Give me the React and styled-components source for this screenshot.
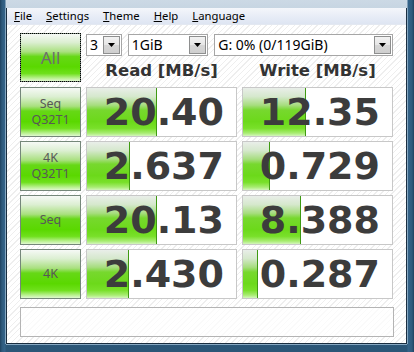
import React from 'react';
import styled, { createGlobalStyle } from 'styled-components';

const menus = [
  ['F', 'ile'],
  ['S', 'ettings'],
  ['T', 'heme'],
  ['H', 'elp'],
  ['L', 'anguage'],
];

const results = [
  { label: ['Seq', 'Q32T1'], read: '20.40', write: '12.35' },
  { label: ['4K', 'Q32T1'], read: '2.637', write: '0.729' },
  { label: ['Seq'], read: '20.13', write: '8.388' },
  { label: ['4K'], read: '2.430', write: '0.287' },
];

// CrystalDiskMark bars use a log scale: 0.1 MB/s .. 10000 MB/s
const barPercent = (value) => {
  const v = parseFloat(value);
  return Math.max(0, Math.min(100, (Math.log10(v * 10) / 5) * 100));
};

function Combo({ value, width }) {
  return (
    <ComboBox $width={width}>
      <ComboText>{value}</ComboText>
      <DropButton>
        <svg width="7" height="4" viewBox="0 0 7 4">
          <path d="M0 0h7L3.5 4z" fill="#000" />
        </svg>
      </DropButton>
    </ComboBox>
  );
}

function ResultCell({ value }) {
  return (
    <Cell>
      <Bar style={{ width: `${barPercent(value)}%` }} />
      <Value>{value}</Value>
    </Cell>
  );
}

export default function App() {
  return (
    <>
      <GlobalStyle />
      <Window>
        <Client>
          <MenuBar>
            {menus.map(([key, rest]) => (
              <MenuItem key={key}>
                <u>{key}</u>
                {rest}
              </MenuItem>
            ))}
          </MenuBar>
          <Body>
            <Top>
              <GreenButton $focused $big>
                All
              </GreenButton>
              <Controls>
                <Combos>
                  <Combo value="3" width={36} />
                  <Combo value="1GiB" width={81} />
                  <Combo value="G: 0% (0/119GiB)" width={180} />
                </Combos>
                <Headers>
                  <Header>Read [MB/s]</Header>
                  <Header>Write [MB/s]</Header>
                </Headers>
              </Controls>
            </Top>
            <Rows>
              {results.map((r) => (
                <Row key={r.label.join('-') + r.read}>
                  <GreenButton>
                    {r.label.map((line) => (
                      <span key={line}>{line}</span>
                    ))}
                  </GreenButton>
                  <ResultCell value={r.read} />
                  <ResultCell value={r.write} />
                </Row>
              ))}
            </Rows>
            <Comment />
          </Body>
        </Client>
      </Window>
    </>
  );
}

const GlobalStyle = createGlobalStyle`
  html, body {
    margin: 0;
    padding: 0;
    width: 414px;
    height: 352px;
    overflow: hidden;
  }
`;

const Window = styled.div`
  box-sizing: border-box;
  width: 414px;
  height: 352px;
  padding: 8px 7px 8px 6px;
  background:
    linear-gradient(to right, #1f4260 0, #2e5a7c 2px, #35648a 5px, transparent 6px, transparent 407px, #35648a 408px, #2e5a7c 412px, #1f4260 414px),
    linear-gradient(to bottom, #ccd9e5 0, #b9cbdb 30px, #5f86a5 100px, #2f5b7e 160px, #2b5677 100%);
`;

const Client = styled.div`
  box-sizing: border-box;
  height: 100%;
  display: flex;
  flex-direction: column;
  border: 1px solid #1a2e40;
  border-top: none;
  box-shadow: 0 1px 0 #86a8c2, -1px 0 0 #86a8c2, 1px 0 0 #86a8c2;
  background: #fff;
`;

const MenuBar = styled.div`
  display: flex;
  height: 17px;
  flex-shrink: 0;
  background: linear-gradient(to bottom, #f4f6fb 0%, #e8edf7 50%, #dee5f2 100%);
  border-bottom: 1px solid #e3e8f1;
  box-sizing: border-box;
`;

const MenuItem = styled.div`
  padding: 0 7px;
  font-family: 'Noto Sans', sans-serif;
  font-size: 11.3px;
  line-height: 16px;
  color: #000;

  u {
    text-decoration: underline;
    text-underline-offset: 1px;
  }
`;

const Body = styled.div`
  flex: 1;
  padding: 8px 12px 6px 13px;
  background-color: #fff;
  background-image: repeating-linear-gradient(
    135deg,
    #ffffff 0px,
    #ffffff 3px,
    #eeeeee 3px,
    #eeeeee 4px
  );
`;

const Top = styled.div`
  display: flex;
  gap: 5px;
`;

const GreenButton = styled.div`
  box-sizing: border-box;
  width: 61px;
  height: ${(p) => (p.$big ? '49px' : '50px')};
  flex-shrink: 0;
  display: flex;
  flex-direction: column;
  align-items: center;
  justify-content: center;
  border: 1px solid #75877a;
  background: linear-gradient(
    to bottom,
    #f6f9f6 0%,
    #dcefd2 18%,
    #a9e07f 38%,
    #66d816 48%,
    #5ad800 70%,
    #6fe01c 84%,
    #b9f18f 94%,
    #e0f8d0 100%
  );
  font-family: 'Noto Sans', sans-serif;
  font-size: ${(p) => (p.$big ? '17px' : '12.5px')};
  line-height: 16px;
  color: ${(p) => (p.$big ? '#6e6e6e' : '#585858')};
  outline: ${(p) => (p.$focused ? '1px dotted #000' : 'none')};
  outline-offset: -1px;
`;

const Controls = styled.div`
  display: flex;
  flex-direction: column;
  width: 307px;
`;

const Combos = styled.div`
  display: flex;
  gap: 6px;
  margin-top: 1px;
`;

const ComboBox = styled.div`
  box-sizing: border-box;
  width: ${(p) => p.$width}px;
  height: 22px;
  display: flex;
  align-items: center;
  border: 1px solid #a6a6a6;
  background: #fff;
`;

const ComboText = styled.div`
  flex: 1;
  padding-left: 3px;
  font-family: 'Noto Sans', sans-serif;
  font-size: 14px;
  line-height: 20px;
  color: #000;
  white-space: nowrap;
  overflow: hidden;
`;

const DropButton = styled.div`
  box-sizing: border-box;
  width: 17px;
  height: 18px;
  margin-right: 1px;
  display: flex;
  align-items: center;
  justify-content: center;
  border: 1px solid #8e8f8f;
  background: linear-gradient(to bottom, #f2f2f2 0%, #e6e6e6 50%, #d6d6d6 51%, #cfcfcf 100%);
`;

const Headers = styled.div`
  display: grid;
  grid-template-columns: 151px 151px;
  column-gap: 5px;
  height: 26px;
  align-items: end;
`;

const Header = styled.div`
  text-align: center;
  font-family: 'DejaVu Sans', sans-serif;
  font-weight: bold;
  font-size: 16.5px;
  line-height: 22px;
  color: #333;
`;

const Rows = styled.div`
  display: flex;
  flex-direction: column;
  gap: 4px;
  margin-top: 5px;
`;

const Row = styled.div`
  display: grid;
  grid-template-columns: 61px 151px 151px;
  column-gap: 5px;
  height: 50px;
`;

const Cell = styled.div`
  position: relative;
  box-sizing: border-box;
  height: 50px;
  border: 1px solid #c8c8c8;
  background: #fff;
  overflow: hidden;
`;

const Bar = styled.div`
  position: absolute;
  left: 0;
  top: 0;
  bottom: 0;
  border-right: 1px solid #3f9a12;
  background: linear-gradient(
    to bottom,
    #e9eee9 0%,
    #d5e8cc 18%,
    #a6dd7e 36%,
    #77d82e 46%,
    #6cd91a 70%,
    #79e02a 84%,
    #a8ec72 94%,
    #d4f6bd 100%
  );
`;

const Value = styled.div`
  position: relative;
  text-align: right;
  padding-right: 12px;
  font-family: 'DejaVu Sans', sans-serif;
  font-weight: bold;
  font-size: 38px;
  line-height: 48px;
  color: #3c3c3c;
`;

const Comment = styled.div`
  box-sizing: border-box;
  margin-top: 8px;
  width: 374px;
  height: 30px;
  border: 1px solid #b4b4b4;
  background: rgba(255, 255, 255, 0.7);
`;
